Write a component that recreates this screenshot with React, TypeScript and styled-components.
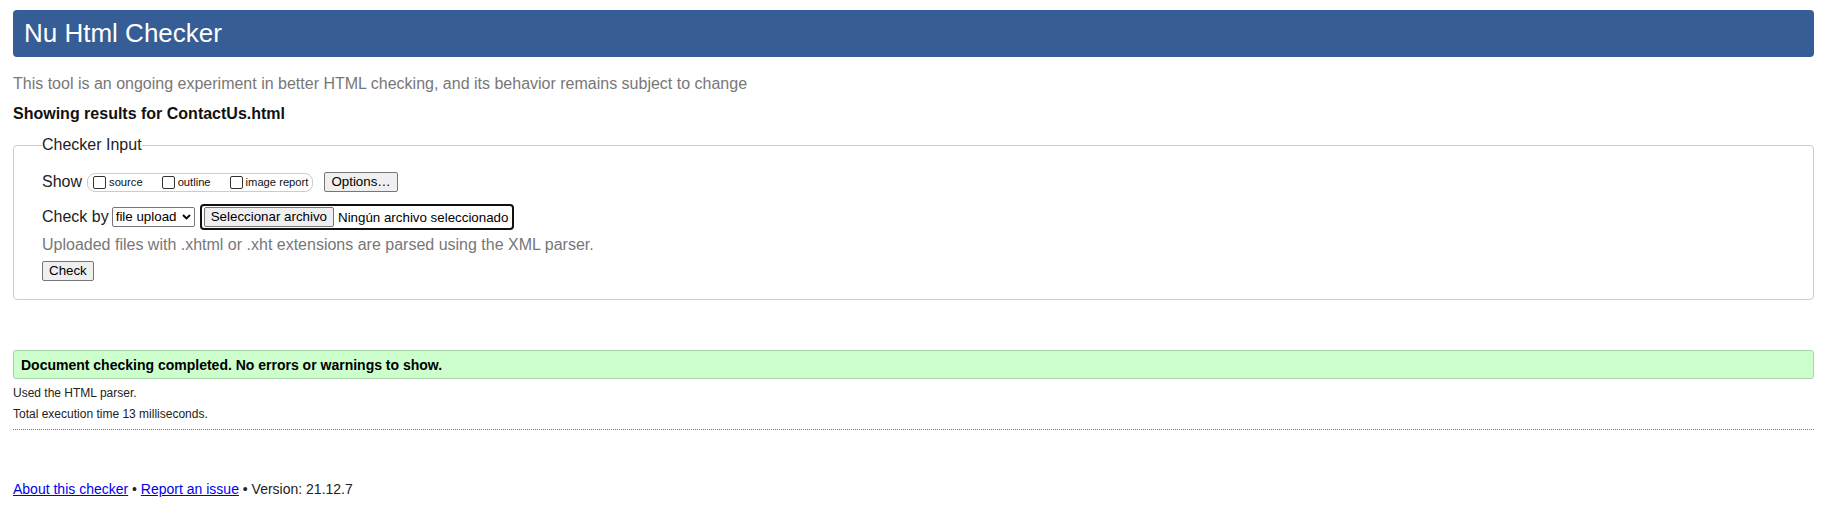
import React from "react";
import styled, { createGlobalStyle } from "styled-components";

const GlobalStyle = createGlobalStyle`
  html, body { margin: 0; padding: 0; background: #fff; }
  body { font-family: "Liberation Sans", Arial, sans-serif; color: #000; }
`;

const Page = styled.div`
  padding: 10px 16px 20px 13px;
`;

const Banner = styled.h1`
  margin: 0;
  height: 47px;
  background: #365d95;
  color: #fff;
  border-radius: 4px;
  font-size: 26px;
  font-weight: normal;
  line-height: 47px;
  padding-left: 11px;
`;

const Intro = styled.p`
  margin: 17px 0 0;
  font-size: 16px;
  line-height: 20px;
  color: #777;
`;

const ResultsFor = styled.p`
  margin: 10px 0 0;
  font-size: 16px;
  line-height: 20px;
  font-weight: bold;
  color: #111;
`;

const InputSet = styled.fieldset`
  margin: 11px 0 0;
  border: 1px solid #ccc;
  border-radius: 4px;
  padding: 0 0 18px 28px;
  min-width: 0;
`;

const SetLegend = styled.legend`
  padding: 0;
  font-size: 16px;
  line-height: 20px;
  color: #222;
`;

const Row = styled.div<{ $top: number }>`
  display: flex;
  align-items: center;
  margin-top: ${(p) => p.$top}px;
`;

const Label = styled.span`
  font-size: 16px;
  line-height: 20px;
  color: #222;
`;

const OptionGroup = styled.span`
  display: inline-flex;
  align-items: center;
  height: 17px;
  border: 1px solid #ccc;
  border-radius: 8px;
  margin-left: 5px;
  padding: 0 4px 0 5px;
  gap: 19px;
`;

const OptionItem = styled.label`
  display: inline-flex;
  align-items: center;
  gap: 3px;
  font-size: 11.2px;
  color: #111;
`;

const Box = styled.input`
  appearance: none;
  margin: 0;
  width: 13px;
  height: 13px;
  border: 1px solid #333;
  border-radius: 2px;
  background: #fff;
`;

const Button = styled.button<{ $left?: number }>`
  font-family: "Liberation Sans", Arial, sans-serif;
  font-size: 13.33px;
  line-height: 16px;
  color: #000;
  background: #efefef;
  border: 1px solid #767676;
  border-radius: 2px;
  padding: 1px 6px;
  margin: 0 0 0 ${(p) => p.$left ?? 0}px;
`;

const SelectWrap = styled.span`
  display: inline-grid;
  align-items: center;
  margin-left: 3px;
  & > * { grid-area: 1 / 1; }
`;

const Select = styled.select`
  appearance: none;
  font-family: "Liberation Sans", Arial, sans-serif;
  font-size: 13.33px;
  line-height: 16px;
  height: 20px;
  width: 83px;
  color: #000;
  background: #fff;
  border: 1px solid #767676;
  border-radius: 2px;
  padding: 0 0 0 3px;
`;

const Chevron = styled.svg`
  justify-self: end;
  margin-right: 4px;
  pointer-events: none;
`;

const FileFocus = styled.span`
  display: inline-flex;
  align-items: center;
  margin-left: 5px;
  border: 2px solid #101010;
  border-radius: 4px;
  padding: 1px 4px 1px 2px;
  gap: 4px;
`;

const FileText = styled.span`
  font-size: 13.33px;
  color: #000;
`;

const Note = styled.p`
  margin: 5px 0 0;
  font-size: 16px;
  line-height: 20px;
  color: #777;
`;

const CheckRow = styled.div`
  margin-top: 6px;
  display: flex;
`;

const Success = styled.div`
  margin-top: 50px;
  height: 27px;
  border: 1px solid #a9d3a9;
  border-radius: 3px;
  background: #ccffcc;
  display: flex;
  align-items: center;
  padding-left: 7px;
  font-size: 14px;
  font-weight: bold;
  color: #000;
`;

const Detail = styled.p<{ $top: number }>`
  margin: ${(p) => p.$top}px 0 0;
  font-size: 12px;
  line-height: 16px;
  color: #222;
`;

const Rule = styled.hr`
  margin: 7px 0 0;
  border: 0;
  border-top: 1px dotted #777;
  height: 0;
`;

const Footer = styled.p`
  margin: 50px 0 0;
  font-size: 14px;
  line-height: 18px;
  color: #222;
`;

const Link = styled.a`
  color: #0000ee;
  text-decoration: underline;
`;

export default function App() {
  return (
    <>
      <GlobalStyle />
      <Page>
        <Banner>Nu Html Checker</Banner>
        <Intro>
          This tool is an ongoing experiment in better HTML checking, and its behavior remains subject to change
        </Intro>
        <ResultsFor>Showing results for ContactUs.html</ResultsFor>
        <InputSet>
          <SetLegend>Checker Input</SetLegend>
          <Row $top={17}>
            <Label>Show</Label>
            <OptionGroup>
              <OptionItem>
                <Box type="checkbox" />
                source
              </OptionItem>
              <OptionItem>
                <Box type="checkbox" />
                outline
              </OptionItem>
              <OptionItem>
                <Box type="checkbox" />
                image report
              </OptionItem>
            </OptionGroup>
            <Button $left={11}>Options…</Button>
          </Row>
          <Row $top={12}>
            <Label>Check by</Label>
            <SelectWrap>
              <Select defaultValue="file">
                <option value="file">file upload</option>
              </Select>
              <Chevron width="9" height="6" viewBox="0 0 9 6">
                <path d="M1 1 L4.5 4.5 L8 1" fill="none" stroke="#000" strokeWidth="1.8" />
              </Chevron>
            </SelectWrap>
            <FileFocus>
              <Button>Seleccionar archivo</Button>
              <FileText>Ningún archivo seleccionado</FileText>
            </FileFocus>
          </Row>
          <Note>Uploaded files with .xhtml or .xht extensions are parsed using the XML parser.</Note>
          <CheckRow>
            <Button>Check</Button>
          </CheckRow>
        </InputSet>
        <Success>Document checking completed. No errors or warnings to show.</Success>
        <Detail $top={6}>Used the HTML parser.</Detail>
        <Detail $top={5}>Total execution time 13 milliseconds.</Detail>
        <Rule />
        <Footer>
          <Link href="#">About this checker</Link> • <Link href="#">Report an issue</Link> • Version: 21.12.7
        </Footer>
      </Page>
    </>
  );
}
